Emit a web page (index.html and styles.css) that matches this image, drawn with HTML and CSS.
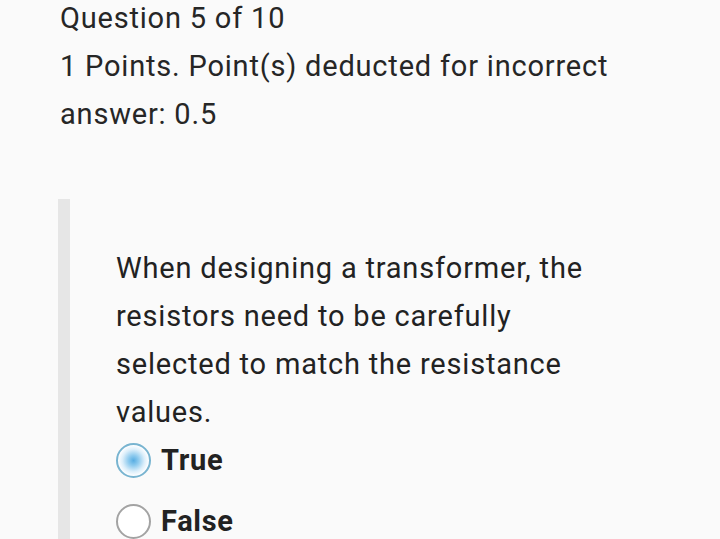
FILE: index.html
```html
<!DOCTYPE html>
<html>
<head>
<meta charset="utf-8">
<link rel="stylesheet" href="styles.css">
</head>
<body>
<div class="page">
  <div class="header">
    <div class="line">Question 5 of 10</div>
    <div class="line">1 Points. Point(s) deducted for incorrect answer: 0.5</div>
  </div>
  <div class="card">
    <div class="bar"></div>
    <div class="content">
      <p class="question">When designing a transformer, the resistors need to be carefully selected to match the resistance values.</p>
      <div class="options">
        <div class="option">
          <span class="radio checked"></span><span class="label">True</span>
        </div>
        <div class="option">
          <span class="radio"></span><span class="label">False</span>
        </div>
      </div>
    </div>
  </div>
</div>
</body>
</html>
```
FILE: styles.css
```css
html, body {
  margin: 0;
  padding: 0;
  background: #fafafa;
  overflow: hidden;
}
body {
  font-family: Roboto, "Noto Sans", sans-serif;
  color: #222;
  width: 720px;
  height: 539px;
}
.page {
  padding: 0 0 0 60px;
}
.header {
  font-size: 29px;
  letter-spacing: 0.8px;
  line-height: 48px;
  color: #262626;
  width: 600px;
  margin-top: -6px;
}
.card {
  display: flex;
  margin-top: 61px;
  margin-left: -2px;
}
.bar {
  width: 12px;
  background: #e6e6e6;
  flex: none;
  height: 400px;
}
.content {
  padding-left: 46px;
  padding-top: 45px;
  width: 500px;
}
.question {
  margin: 0;
  font-size: 29px;
  letter-spacing: 0.8px;
  line-height: 48px;
  color: #222;
}
.options {
  display: flex;
  flex-direction: column;
  gap: 13px;
}
.option {
  display: flex;
  align-items: center;
  height: 48px;
}
.radio {
  width: 35px;
  height: 35px;
  border-radius: 50%;
  border: 2px solid #a3a3a3;
  box-sizing: border-box;
  background: #fff;
  margin-right: 10px;
  flex: none;
}
.radio.checked {
  border-color: #78b4d0;
  background: radial-gradient(circle, #58ade2 0, #8dcaee 5px, #dbeefa 11px, #fbfdff 15px);
}
.label {
  font-size: 29px;
  letter-spacing: 0.7px;
  font-weight: 700;
  color: #222;
}
```
